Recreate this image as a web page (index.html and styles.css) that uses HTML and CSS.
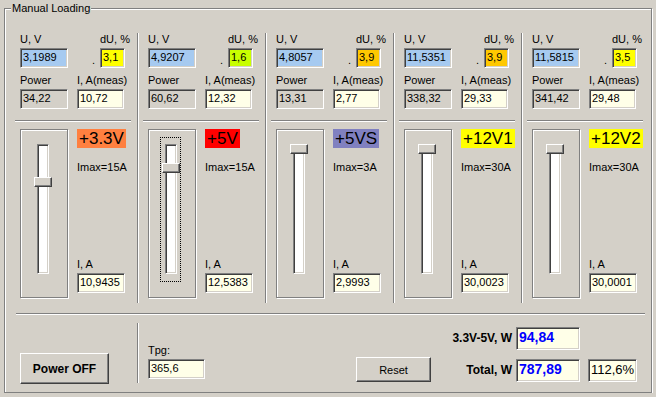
FILE: index.html
```html
<!DOCTYPE html>
<html lang="en">
<head>
    <meta charset="UTF-8">
    <title>Manual Loading</title>
    <link rel="stylesheet" href="styles.css">
</head>
<body>
    <div class="group">
        <span class="group-title">Manual Loading</span>

        <div class="columns">
            <div class="col">
                <div class="labels"><span class="lbl-u">U, V</span><span>dU, %</span></div>
                <div class="row"><div class="edit w48 blue">3,1989</div><span class="dot">.</span><div class="edit du yellow">3,1</div></div>
                <div class="labels second"><span class="lbl-p">Power</span><span>I, A(meas)</span></div>
                <div class="row"><div class="edit w48 grey">34,22</div><div class="edit imeas ivory">10,72</div></div>
                <div class="sep"></div>
                <div class="lower">
                    <div class="frame"><div class="slider"><div class="track"><div class="thumb" style="top: 32px"></div></div></div></div>
                    <div class="info">
                        <span class="badge b-orange">+3.3V</span>
                        <span class="imax">Imax=15A</span>
                        <span class="ia">I, A</span>
                        <div class="edit w48 ivory ia-box">10,9435</div>
                    </div>
                </div>
            </div>

            <div class="col">
                <div class="labels"><span class="lbl-u">U, V</span><span>dU, %</span></div>
                <div class="row"><div class="edit w48 blue">4,9207</div><span class="dot">.</span><div class="edit du lime">1,6</div></div>
                <div class="labels second"><span class="lbl-p">Power</span><span>I, A(meas)</span></div>
                <div class="row"><div class="edit w48 grey">60,62</div><div class="edit imeas ivory">12,32</div></div>
                <div class="sep"></div>
                <div class="lower">
                    <div class="frame"><div class="slider focus"><div class="track"><div class="thumb" style="top: 18px"></div></div></div></div>
                    <div class="info">
                        <span class="badge b-red">+5V</span>
                        <span class="imax">Imax=15A</span>
                        <span class="ia">I, A</span>
                        <div class="edit w48 ivory ia-box">12,5383</div>
                    </div>
                </div>
            </div>

            <div class="col">
                <div class="labels"><span class="lbl-u">U, V</span><span>dU, %</span></div>
                <div class="row"><div class="edit w48 blue">4,8057</div><span class="dot">.</span><div class="edit du orange">3,9</div></div>
                <div class="labels second"><span class="lbl-p">Power</span><span>I, A(meas)</span></div>
                <div class="row"><div class="edit w48 grey">13,31</div><div class="edit imeas ivory">2,77</div></div>
                <div class="sep"></div>
                <div class="lower">
                    <div class="frame"><div class="slider"><div class="track"><div class="thumb" style="top: -1px"></div></div></div></div>
                    <div class="info">
                        <span class="badge b-violet">+5VS</span>
                        <span class="imax">Imax=3A</span>
                        <span class="ia">I, A</span>
                        <div class="edit w48 ivory ia-box">2,9993</div>
                    </div>
                </div>
            </div>

            <div class="col">
                <div class="labels"><span class="lbl-u">U, V</span><span>dU, %</span></div>
                <div class="row"><div class="edit w48 blue">11,5351</div><span class="dot">.</span><div class="edit du orange">3,9</div></div>
                <div class="labels second"><span class="lbl-p">Power</span><span>I, A(meas)</span></div>
                <div class="row"><div class="edit w48 grey">338,32</div><div class="edit imeas ivory">29,33</div></div>
                <div class="sep"></div>
                <div class="lower">
                    <div class="frame"><div class="slider"><div class="track"><div class="thumb" style="top: -1px"></div></div></div></div>
                    <div class="info">
                        <span class="badge b-yellow">+12V1</span>
                        <span class="imax">Imax=30A</span>
                        <span class="ia">I, A</span>
                        <div class="edit w48 ivory ia-box">30,0023</div>
                    </div>
                </div>
            </div>

            <div class="col">
                <div class="labels"><span class="lbl-u">U, V</span><span>dU, %</span></div>
                <div class="row"><div class="edit w48 blue">11,5815</div><span class="dot">.</span><div class="edit du yellow">3,5</div></div>
                <div class="labels second"><span class="lbl-p">Power</span><span>I, A(meas)</span></div>
                <div class="row"><div class="edit w48 grey">341,42</div><div class="edit imeas ivory">29,48</div></div>
                <div class="sep"></div>
                <div class="lower">
                    <div class="frame"><div class="slider"><div class="track"><div class="thumb" style="top: -1px"></div></div></div></div>
                    <div class="info">
                        <span class="badge b-yellow">+12V2</span>
                        <span class="imax">Imax=30A</span>
                        <span class="ia">I, A</span>
                        <div class="edit w48 ivory ia-box">30,0001</div>
                    </div>
                </div>
            </div>
        </div>

        <div class="sep sep-bottom"></div>

        <div class="bottom">
            <button class="btn btn-power">Power OFF</button>
            <div class="tpg">
                <div>Tpg:</div>
                <div class="edit ivory tpg-box">365,6</div>
            </div>
            <button class="btn btn-reset">Reset</button>
            <div class="totals">
                <div class="total-row">
                    <span class="total-label">3.3V-5V, W</span>
                    <div class="edit ivory big">94,84</div>
                </div>
                <div class="total-row">
                    <span class="total-label">Total, W</span>
                    <div class="edit ivory big">787,89</div>
                    <div class="edit ivory pct">112,6%</div>
                </div>
            </div>
        </div>
    </div>
</body>
</html>
```

FILE: styles.css
```css
* {
    box-sizing: border-box;
}

body {
    margin: 0;
    background: #d4d0c8;
    font-family: "Liberation Sans", Arial, sans-serif;
    font-size: 11px;
    line-height: 13px;
    color: #000;
}

/* etched group frame */
.group {
    position: relative;
    width: 648px;
    height: 385px;
    margin: 8px 0 0 4px;
    border: 1px solid #808080;
    box-shadow: inset 1px 1px #fff, 1px 1px #fff;
}

.group-title {
    position: absolute;
    top: -7px;
    left: 6px;
    padding: 0 1px;
    background: #d4d0c8;
}

.columns {
    display: flex;
    margin-top: 24px;
    height: 270px;
}

.col {
    width: 128px;
    padding-left: 10px;
    border-left: 1px solid #808080;
    box-shadow: inset 1px 0 #fff;
}

.col:first-child {
    width: 132px;
    padding-left: 15px;
    border-left: none;
    box-shadow: none;
}

.col:last-child {
    flex: 1;
}

.labels {
    display: flex;
    height: 13px;
    white-space: nowrap;
}

.labels.second {
    margin-top: 6px;
}

.lbl-u {
    width: 80px;
}

.lbl-p {
    width: 57px;
}

.row {
    display: flex;
    height: 20px;
    margin-top: 2px;
}

/* sunken edit box */
.edit {
    height: 20px;
    padding: 0 2px;
    border: 1px solid;
    border-color: #808080 #fff #fff #808080;
    box-shadow: inset 1px 1px #404040, inset -1px -1px #d4d0c8;
    line-height: 16px;
    white-space: nowrap;
    overflow: hidden;
}

.w48 { width: 48px; }
.du { width: 25px; }
.imeas { width: 47px; margin-left: 9px; }

.blue { background: #a6caf0; }
.grey { background: #d4d0c8; }
.ivory { background: #ffffe8; }
.yellow { background: #ffff00; }
.lime { background: #c8ff00; }
.orange { background: #ffc800; }

.dot {
    width: 32px;
    padding-left: 24px;
    line-height: 24px;
}

.sep {
    height: 2px;
    border-top: 1px solid #808080;
    border-bottom: 1px solid #fff;
}

.col .sep {
    width: 116px;
    margin: 11px 0 0 -5px;
}

.lower {
    display: flex;
    gap: 9px;
    height: 169px;
    margin-top: 7px;
}

.frame {
    width: 48px;
    height: 169px;
    padding: 7px 0 0 11px;
    border: 1px solid #808080;
    box-shadow: inset 1px 1px #fff, 1px 1px #fff;
}

.slider {
    width: 21px;
    height: 145px;
    padding: 6px 3px 6px 4px;
    border: 1px dotted transparent;
}

.slider.focus {
    border-color: #000;
}

.track {
    position: relative;
    width: 12px;
    height: 130px;
    background: #fff;
    border: 1px solid;
    border-color: #808080 #fff #fff #808080;
    box-shadow: inset 1px 1px #404040, inset -1px -1px #d4d0c8;
}

.thumb {
    position: absolute;
    left: -4px;
    width: 18px;
    height: 10px;
    background: #d4d0c8;
    border: 1px solid;
    border-color: #fff #404040 #404040 #fff;
    box-shadow: inset -1px -1px #808080;
}

.info {
    display: flex;
    flex-direction: column;
    align-items: flex-start;
    padding-bottom: 5px;
    white-space: nowrap;
}

.badge {
    padding: 0 2px;
    font-size: 17px;
    line-height: 19px;
}

.b-orange { background: #ff8040; }
.b-red { background: #ff0000; }
.b-violet { background: #8080c0; }
.b-yellow { background: #ffff00; }

.imax {
    margin-top: 13px;
}

.ia {
    margin-top: auto;
}

.ia-box {
    margin-top: 2px;
}

.sep-bottom {
    margin: 10px 6px 0 11px;
}

.bottom {
    display: flex;
    align-items: flex-start;
}

/* raised button */
.btn {
    padding: 0;
    background: #d4d0c8;
    border: 1px solid;
    border-color: #fff #404040 #404040 #fff;
    box-shadow: inset -1px -1px #808080;
    font-family: inherit;
    font-size: 11px;
    color: #000;
}

.btn-power {
    width: 89px;
    height: 31px;
    margin: 38px 0 0 15px;
    font-size: 12px;
    font-weight: bold;
}

.tpg {
    width: 219px;
    height: 60px;
    margin: 8px 0 0 28px;
    padding: 21px 0 0 10px;
    border-left: 1px solid #808080;
    box-shadow: inset 1px 0 #fff;
}

.tpg-box {
    width: 57px;
    margin-top: 2px;
}

.btn-reset {
    width: 75px;
    height: 25px;
    margin-top: 42px;
}

.totals {
    margin-top: 12px;
}

.total-row {
    display: flex;
    height: 23px;
}

.total-row + .total-row {
    margin-top: 9px;
}

.total-label {
    width: 81px;
    text-align: right;
    font-size: 12px;
    font-weight: bold;
    line-height: 23px;
    white-space: nowrap;
}

.big {
    width: 64px;
    height: 23px;
    margin-left: 4px;
    font-size: 14px;
    font-weight: bold;
    line-height: 19px;
    color: #0000ff;
}

.pct {
    width: 49px;
    height: 23px;
    margin-left: 8px;
    font-size: 13px;
    line-height: 19px;
}
```
